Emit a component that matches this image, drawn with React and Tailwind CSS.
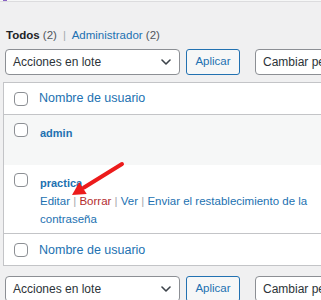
import React from 'react';

const font = { fontFamily: '"Liberation Sans", Arial, sans-serif' };

// casilla de verificación de WP
function Checkbox() {
  return <span className="block w-[14px] h-[14px] shrink-0 rounded-[4px] border border-[#8c8f94] bg-white"></span>;
}

// acciones en lote + aplicar + cambiar perfil
function TableNav() {
  return (
    <div className="flex items-center h-[26px] pl-[5px] whitespace-nowrap">
      <div className="flex items-center justify-between shrink-0 w-[175px] h-[26px] rounded-[4px] border border-[#8c8f94] bg-white pl-[7px] pr-[8px] text-[12px] text-[#2c3338]">
        <span>Acciones en lote</span>
        <svg width="10" height="6" viewBox="0 0 10 6" fill="none" stroke="#3c434a" strokeWidth="1.6" strokeLinecap="round" strokeLinejoin="round">
          <path d="M1 1l4 4 4-4" />
        </svg>
      </div>
      <button className="ml-[6px] shrink-0 w-[54px] h-[26px] rounded-[3px] border border-[#2271b1] bg-[#f6f7f7] text-[11.5px] text-[#2271b1]">
        Aplicar
      </button>
      <div className="ml-[15px] flex items-center w-[160px] h-[26px] shrink-0 rounded-[4px] border border-[#8c8f94] bg-white pl-[7px] text-[12px] text-[#2c3338]">
        Cambiar perfil a…
      </div>
    </div>
  );
}

export default function App() {
  return (
    <div className="relative w-[321px] h-[300px] overflow-hidden bg-[#f0f0f1]" style={font}>
      {/* franja superior */}
      <div className="h-[2px] bg-[#f6f7f7] border-b border-[#dcdcde] flex">
        <span className="ml-[3px] w-[4px] h-[1px] bg-[#8a63c4]"></span>
      </div>

      {/* filtros */}
      <div className="pt-[24px] pl-[6px] h-[47px] text-[11.5px] leading-[18px] text-[#50575e] whitespace-nowrap">
        <span className="font-bold text-[#1d2327]">Todos</span> (2) <span className="text-[#a7aaad] mx-[3px]">|</span>{' '}
        <span className="text-[#2271b1]">Administrador <span className="text-[#50575e]">(2)</span></span>
      </div>

      <TableNav />

      {/* tabla de usuarios */}
      <div className="mt-[7px] ml-[3px] w-[420px] border border-[#c3c4c7] bg-white">
        <div className="flex items-center h-[32px] border-b border-[#c3c4c7] pl-[10px]">
          <Checkbox />
          <span className="ml-[11px] text-[12.5px] text-[#2271b1]">Nombre de usuario</span>
        </div>

        <div className="flex h-[50px] bg-[#f6f7f7] pl-[10px] pt-[8px]">
          <Checkbox />
          <span className="ml-[12px] mt-[1px] text-[11px] leading-[18px] font-bold text-[#2271b1]">admin</span>
        </div>

        <div className="flex h-[68px] bg-white pl-[10px] pt-[8px]">
          <Checkbox />
          <div className="ml-[12px] mt-[1px] w-[282px] text-[11.5px] leading-[18px]">
            <div className="font-bold text-[11px] text-[#2271b1]">practica</div>
            <div className="text-[#a7aaad]">
              <span className="text-[#2271b1]">Editar</span> | <span className="text-[#b32d2e]">Borrar</span> |{' '}
              <span className="text-[#2271b1]">Ver</span> |{' '}
              <span className="text-[#2271b1]">Enviar el restablecimiento de la contraseña</span>
            </div>
          </div>
        </div>

        <div className="flex items-center h-[32px] border-t border-[#c3c4c7] pl-[10px]">
          <Checkbox />
          <span className="ml-[11px] mt-[1px] text-[12.5px] text-[#2271b1]">Nombre de usuario</span>
        </div>
      </div>

      <div className="mt-[10px]">
        <TableNav />
      </div>

      {/* flecha roja */}
      <svg className="absolute left-0 top-0 pointer-events-none" width="321" height="300" viewBox="0 0 321 300">
        <line x1="122" y1="164" x2="84" y2="187.5" stroke="#ec1b1b" strokeWidth="4" strokeLinecap="round" />
        <polygon points="72,195 79.3,182.2 86.7,194" fill="#ec1b1b" />
      </svg>
    </div>
  );
}
